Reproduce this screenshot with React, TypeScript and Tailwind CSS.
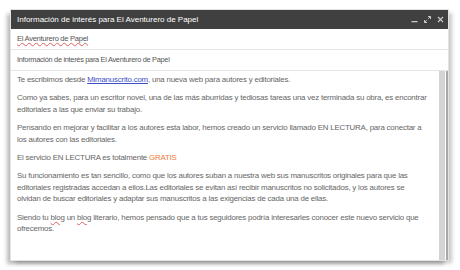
import React from "react";

const spell = "underline decoration-wavy decoration-[#e06060] decoration-[0.5px] underline-offset-[1px]";

export default function App() {
  return (
    <div className="w-[460px] h-[270px] bg-white overflow-hidden pt-[10px] pl-[11px] font-['Liberation_Sans',Arial,sans-serif]">
      {/* compose window */}
      <div className="w-[437px] h-[250px] flex flex-col bg-white shadow-[0_0_0_1px_#e2e2e2,-4px_4px_4px_rgba(0,0,0,0.28),4px_3px_4px_rgba(0,0,0,0.22)]">
        {/* header */}
        <div className="h-[19px] bg-[#404040] flex items-center justify-between pl-[6px] pr-[4px] text-white text-[8px]">
          <span>Información de interés para El Aventurero de Papel</span>
          <div className="flex items-center gap-[6px] text-[#c8c8c8]">
            <svg width="7" height="7" viewBox="0 0 7 7">
              <rect x="0.5" y="5" width="6" height="1.3" fill="currentColor" />
            </svg>
            <svg width="7" height="7" viewBox="0 0 7 7" fill="none" stroke="currentColor" strokeWidth="1">
              <path d="M4 0.5h2.5V3M6.5 0.5L4.2 2.8M3 6.5H0.5V4M0.5 6.5l2.3-2.3" />
            </svg>
            <svg width="7" height="7" viewBox="0 0 7 7" stroke="currentColor" strokeWidth="1.2">
              <path d="M1 1l5 5M6 1L1 6" />
            </svg>
          </div>
        </div>

        {/* to */}
        <div className="h-[21px] border-b border-[#e6e6e6] flex items-center px-[6px] text-[7.6px] tracking-[-0.3px] text-[#555]">
          <span className={spell}>El Aventurero de Papel</span>
        </div>

        {/* subject */}
        <div className="h-[21px] border-b border-[#e6e6e6] flex items-center px-[6px] text-[7.4px] tracking-[-0.3px] text-[#555]">
          Información de interés para El Aventurero de Papel
        </div>

        {/* body */}
        <div className="flex-1 flex min-h-0">
          <div className="flex-1 pl-[6px] pr-[9px] pt-[3px] text-[7.9px] tracking-[-0.2px] leading-[11.4px] text-[#666]">
            <p className="mb-[7px]">
              Te escribimos desde{" "}
              <span className="text-[#3d4fc4] underline">Mimanuscrito.com</span>, una nueva web para autores y editoriales.
            </p>
            <p className="mb-[7px]">
              Como ya sabes, para un escritor novel, una de las más aburridas y tediosas tareas una vez terminada su obra, es encontrar editoriales a las que enviar su trabajo.
            </p>
            <p className="mb-[7px]">
              Pensando en mejorar y facilitar a los autores esta labor, hemos creado un servicio llamado EN LECTURA, para conectar a los autores con las editoriales.
            </p>
            <p className="mb-[7px]">
              El servicio EN LECTURA es totalmente <span className="text-[#f07a3a]">GRATIS</span>
            </p>
            <p className="mb-[7px]">
              Su funcionamiento es tan sencillo, como que los autores suban a nuestra web sus manuscritos originales para que las editoriales registradas accedan a ellos.Las editoriales se evitan así recibir manuscritos no solicitados, y los autores se olvidan de buscar editoriales y adaptar sus manuscritos a las exigencias de cada una de ellas.
            </p>
            <p>
              Siendo tu <span className={spell}>blog</span> un <span className={spell}>blog</span> literario, hemos pensado que a tus seguidores podría interesarles conocer este nuevo servicio que ofrecemos.
            </p>
          </div>
          {/* scrollbar */}
          <div className="w-[6px] bg-[#d4d4d4] mr-[1px]" />
          <div className="w-[2px] bg-[#a8a8a8]" />
        </div>
      </div>
    </div>
  );
}
